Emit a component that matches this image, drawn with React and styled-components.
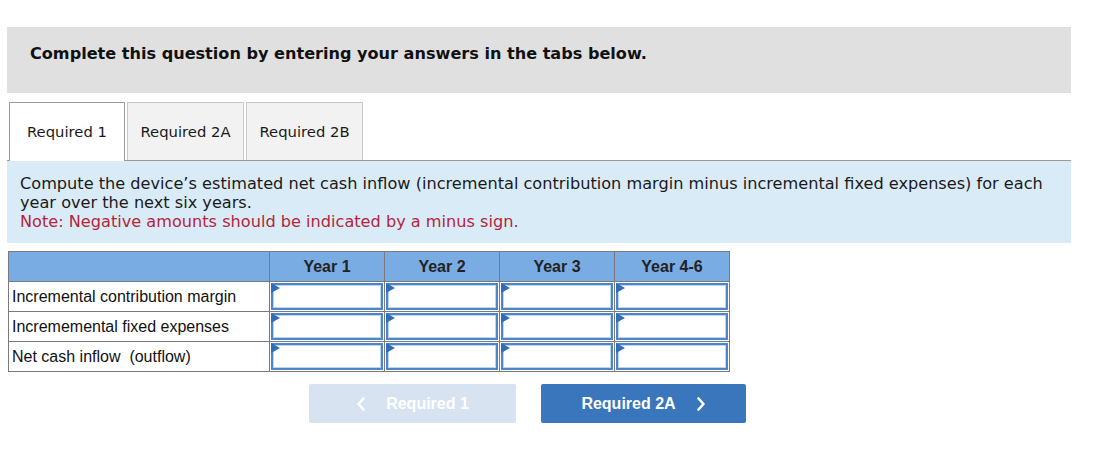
import React from "react";
import styled, { createGlobalStyle } from "styled-components";

const GlobalStyle = createGlobalStyle`
  body {
    margin: 0;
    background: #fff;
    font-family: "DejaVu Sans", Verdana, sans-serif;
    color: #1a1a1a;
  }
`;

const years = ["Year 1", "Year 2", "Year 3", "Year 4-6"];
const rows = [
  "Incremental contribution margin",
  "Incrememental fixed expenses",
  "Net cash inflow  (outflow)",
];
const tabs = ["Required 1", "Required 2A", "Required 2B"];

export default function App() {
  return (
    <Page>
      <GlobalStyle />
      <Banner>Complete this question by entering your answers in the tabs below.</Banner>

      <TabBar>
        {tabs.map((t, i) => (
          <Tab key={t} $active={i === 0}>
            {t}
          </Tab>
        ))}
      </TabBar>

      <Instructions>
        Compute the device’s estimated net cash inflow (incremental contribution margin minus
        incremental fixed expenses) for each year over the next six years.
        <Note>Note: Negative amounts should be indicated by a minus sign.</Note>
      </Instructions>

      <Table>
        <thead>
          <tr>
            <HeadCell $label />
            {years.map((y) => (
              <HeadCell key={y}>{y}</HeadCell>
            ))}
          </tr>
        </thead>
        <tbody>
          {rows.map((r) => (
            <tr key={r}>
              <LabelCell>{r}</LabelCell>
              {years.map((y) => (
                <InputCell key={y}>
                  <InputBox>
                    <Flag />
                  </InputBox>
                </InputCell>
              ))}
            </tr>
          ))}
        </tbody>
      </Table>

      <NavRow>
        <NavButton $disabled>
          <Chevron viewBox="0 0 10 16">
            <path d="M7.5 2.5 L2.5 8 L7.5 13.5" />
          </Chevron>
          <span>Required 1</span>
        </NavButton>
        <NavButton>
          <span>Required 2A</span>
          <Chevron viewBox="0 0 10 16">
            <path d="M2.5 2.5 L7.5 8 L2.5 13.5" />
          </Chevron>
        </NavButton>
      </NavRow>
    </Page>
  );
}

const Page = styled.div`
  padding: 27px 0 0 7px;
  width: 1064px;
`;

const Banner = styled.div`
  box-sizing: border-box;
  height: 66px;
  background: #e0e0e0;
  padding: 17px 23px 0;
  font-size: 16.1px;
  line-height: 20px;
  font-weight: bold;
  color: #111;
`;

const TabBar = styled.div`
  display: flex;
  align-items: flex-end;
  gap: 2px;
  margin-top: 9px;
  padding-left: 2px;
  border-bottom: 1px solid #9a9a9a;
  height: 58px;
`;

const Tab = styled.div`
  box-sizing: border-box;
  width: ${(p) => (p.$active ? "116px" : "117px")};
  height: ${(p) => (p.$active ? "59px" : "58px")};
  margin-bottom: ${(p) => (p.$active ? "-1px" : "0")};
  background: ${(p) => (p.$active ? "#fff" : "#f2f2f2")};
  border: 1px solid ${(p) => (p.$active ? "#9a9a9a" : "#c8c8c8")};
  border-bottom: ${(p) => (p.$active ? "none" : "0")};
  display: flex;
  align-items: center;
  justify-content: center;
  padding-bottom: ${(p) => (p.$active ? "1px" : "0")};
  font-size: 14.8px;
  color: #1a1a1a;
`;

const Instructions = styled.div`
  background: #daebf8;
  padding: 13px 13px 12px;
  font-size: 16.15px;
  line-height: 19px;
  color: #1a1a1a;
`;

const Note = styled.div`
  color: #b3263a;
`;

const Table = styled.table`
  margin-top: 8px;
  margin-left: 1px;
  border-collapse: collapse;
  font-family: "Liberation Sans", Arial, sans-serif;
  font-size: 16px;
  color: #111;
`;

const HeadCell = styled.th`
  background: #79ace3;
  border: 1px solid #7a7a7a;
  height: 29px;
  width: ${(p) => (p.$label ? "260px" : "114px")};
  padding: 0;
  font-weight: bold;
  font-size: 16px;
  color: #222;
`;

const LabelCell = styled.td`
  border: 1px solid #7a7a7a;
  height: 29px;
  padding: 0 0 0 3px;
  text-align: left;
  white-space: pre;
`;

const InputCell = styled.td`
  border: 1px solid #7a7a7a;
  padding: 1px;
  height: 27px;
`;

const InputBox = styled.div`
  position: relative;
  box-sizing: border-box;
  height: 27px;
  background: #fff;
  border: 2px solid #4f85c6;
  box-shadow: inset 0 0 0 1px #bcd5f0;
`;

const Flag = styled.span`
  display: block;
  position: absolute;
  top: -2px;
  left: -2px;
  width: 0;
  height: 0;
  border-top: 5px solid transparent;
  border-bottom: 5px solid transparent;
  border-left: 9px solid #2f6db5;
`;

const NavRow = styled.div`
  display: flex;
  gap: 25px;
  margin: 12px 0 0 302px;
`;

const NavButton = styled.div`
  box-sizing: border-box;
  width: ${(p) => (p.$disabled ? "207px" : "205px")};
  height: 39px;
  border-radius: 2px;
  background: ${(p) => (p.$disabled ? "#d7e3f1" : "#3a76bb")};
  color: #fff;
  display: flex;
  align-items: center;
  justify-content: center;
  gap: 20px;
  font-family: "Liberation Sans", Arial, sans-serif;
  font-weight: bold;
  font-size: 16px;
`;

const Chevron = styled.svg`
  width: 10px;
  height: 16px;
  fill: none;
  stroke: #fff;
  stroke-width: 2.6;
  stroke-linecap: round;
  stroke-linejoin: round;
`;
